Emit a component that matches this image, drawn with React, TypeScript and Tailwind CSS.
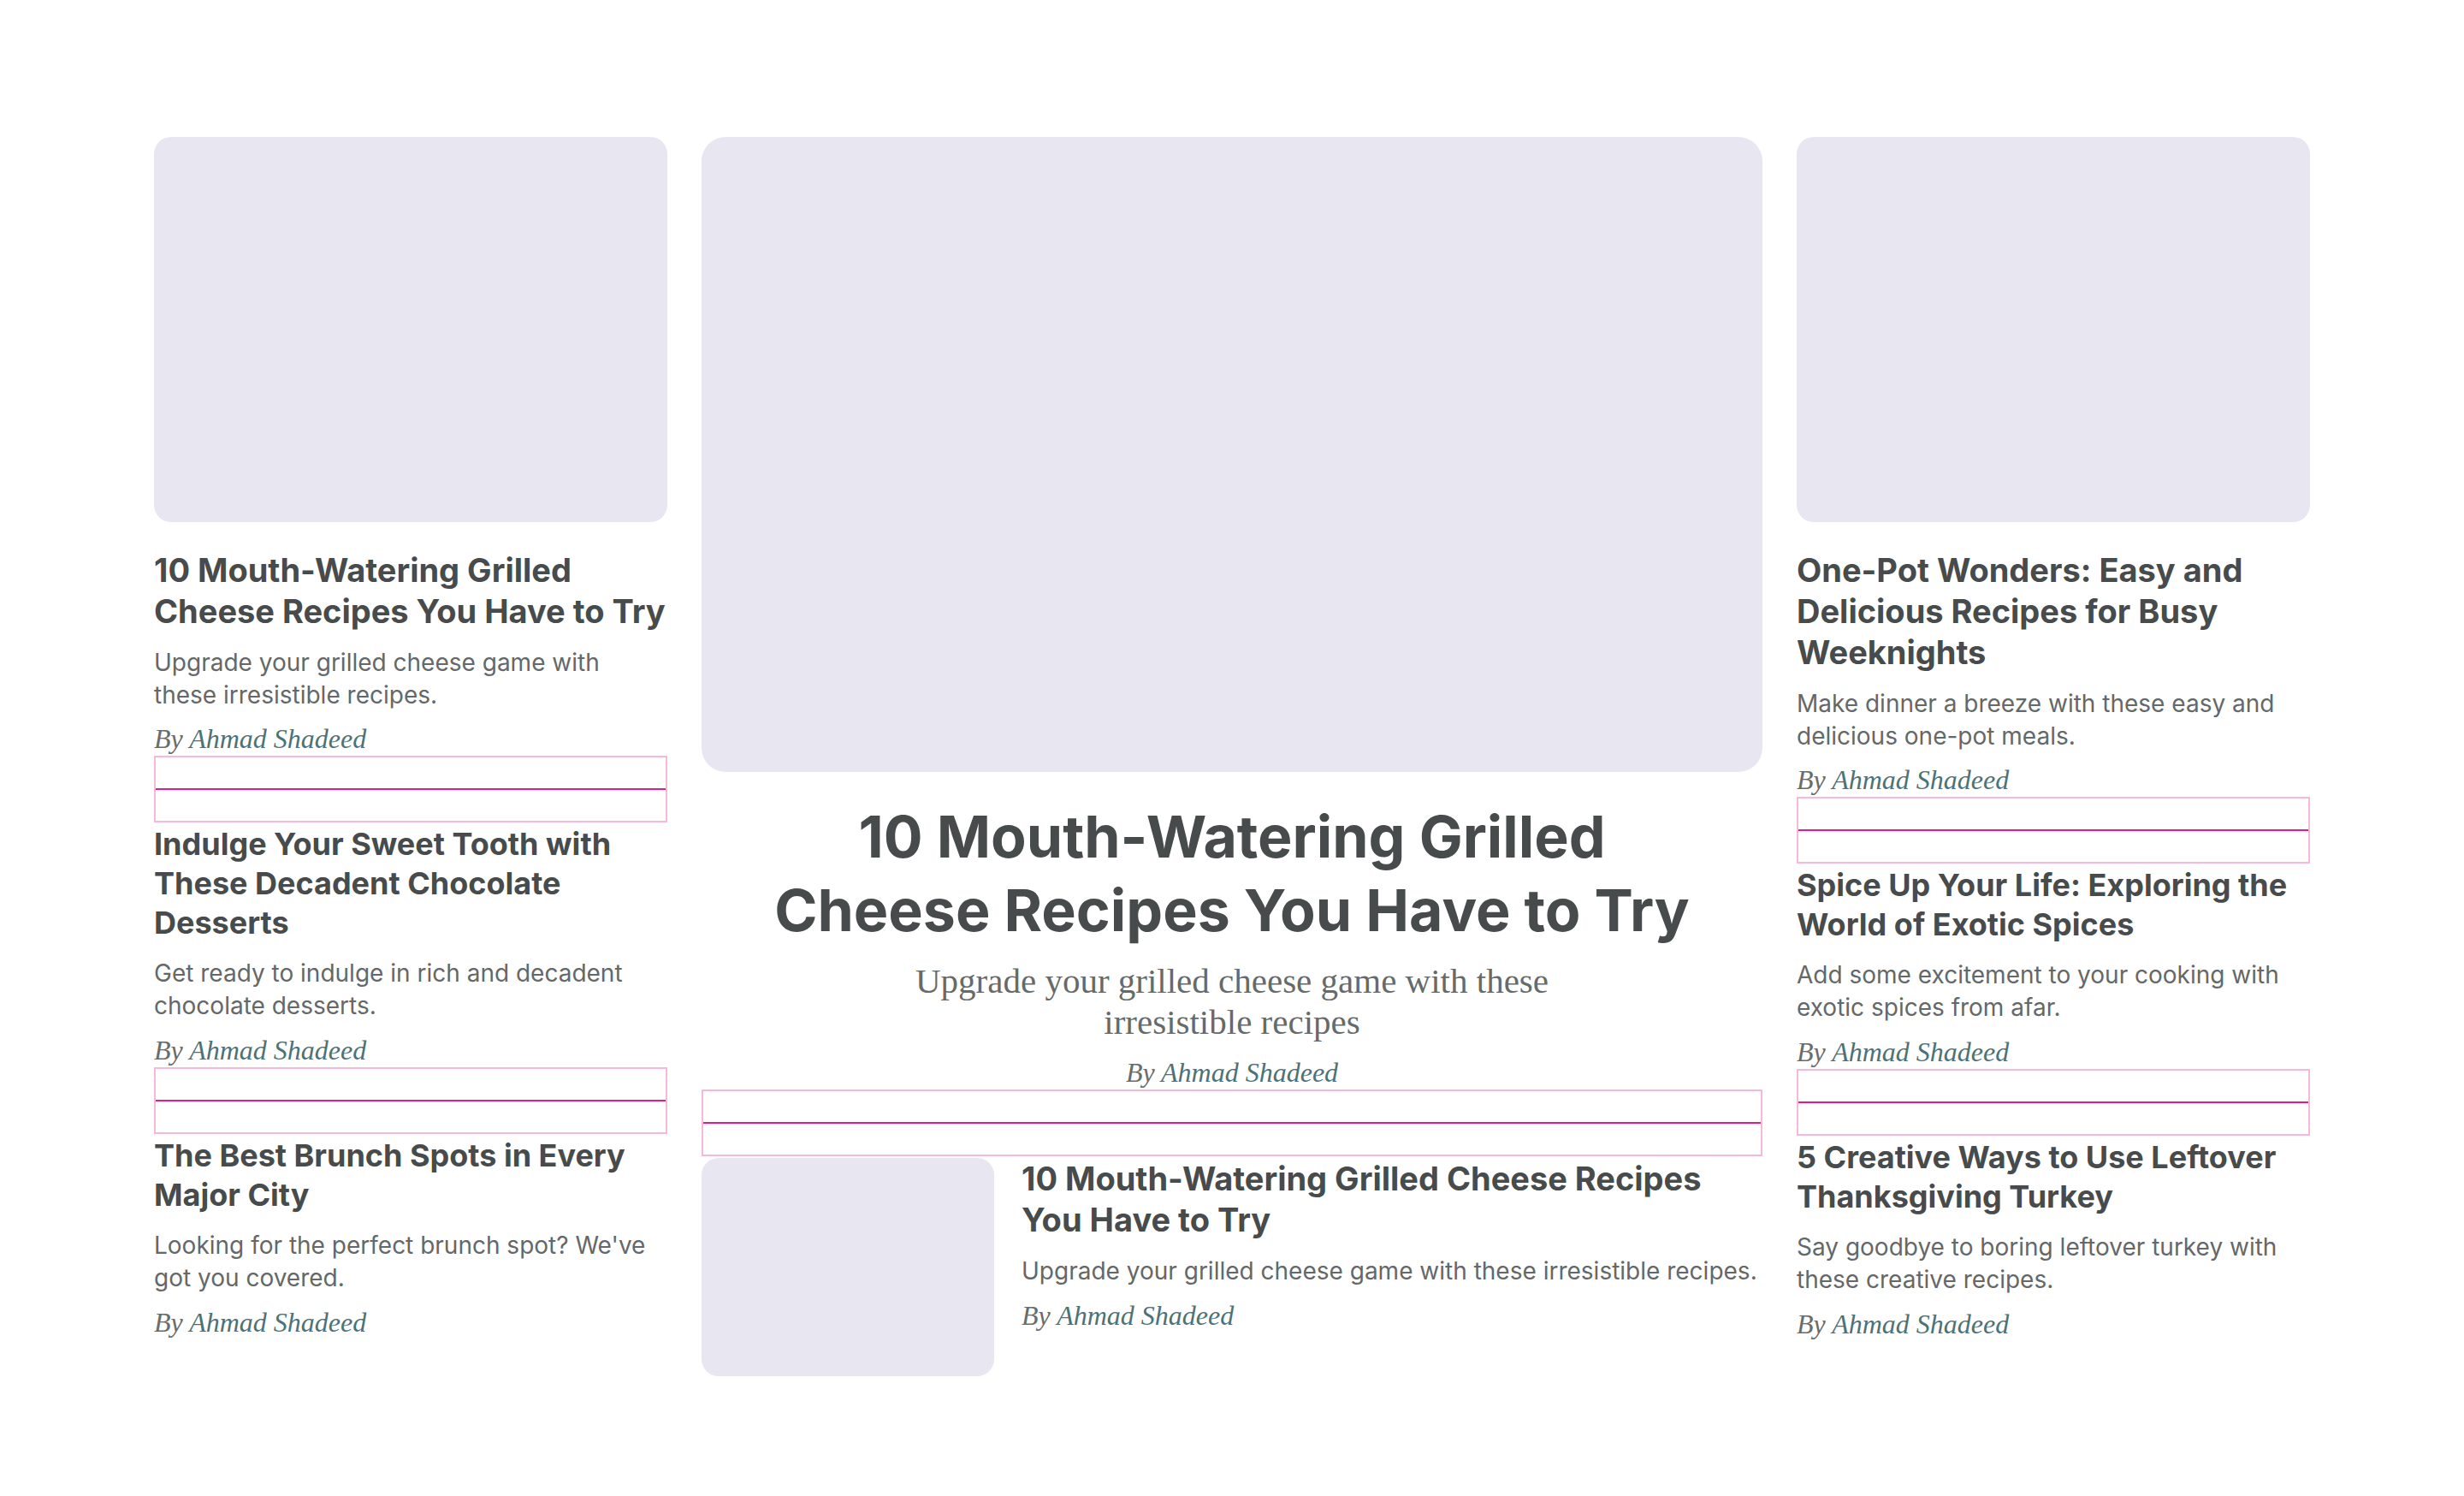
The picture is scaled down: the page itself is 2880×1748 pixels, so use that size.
import React from 'react';

type Article = {
  title: string;
  desc: string;
  image?: boolean;
};

const LEFT: Article[] = [
  {
    title: '10 Mouth-Watering Grilled Cheese Recipes You Have to Try',
    desc: 'Upgrade your grilled cheese game with these irresistible recipes.',
    image: true,
  },
  {
    title: 'Indulge Your Sweet Tooth with These Decadent Chocolate Desserts',
    desc: 'Get ready to indulge in rich and decadent chocolate desserts.',
  },
  {
    title: 'The Best Brunch Spots in Every Major City',
    desc: "Looking for the perfect brunch spot? We've got you covered.",
  },
];

const RIGHT: Article[] = [
  {
    title: 'One-Pot Wonders: Easy and Delicious Recipes for Busy Weeknights',
    desc: 'Make dinner a breeze with these easy and delicious one-pot meals.',
    image: true,
  },
  {
    title: 'Spice Up Your Life: Exploring the World of Exotic Spices',
    desc: 'Add some excitement to your cooking with exotic spices from afar.',
  },
  {
    title: '5 Creative Ways to Use Leftover Thanksgiving Turkey',
    desc: 'Say goodbye to boring leftover turkey with these creative recipes.',
  },
];

const sans = "font-['Inter','Liberation_Sans',sans-serif]";
const serif = "font-['Liberation_Serif','DejaVu_Serif',serif]";

function Byline({ className = '' }: { className?: string }) {
  return (
    <p className={`${serif} italic text-[32px] leading-[40px] text-[#6b6b6b] ${className}`}>
      By <span className="text-[#4d7178]">Ahmad Shadeed</span>
    </p>
  );
}

function Separator() {
  return (
    <div className="h-[78px] border-2 border-[#f7b8dc] flex items-center">
      <div className="h-[2px] w-full bg-[#e8198a]" />
    </div>
  );
}

function Card({ article, last }: { article: Article; last: boolean }) {
  return (
    <article>
      {article.image && <div className="aspect-[4/3] w-full rounded-[20px] bg-[#e8e7f1] mb-8" />}
      <h3
        className={`font-bold text-[#474b4b] ${
          article.image ? 'text-[38px] leading-[48px]' : 'text-[36px] leading-[46px] mt-[2px]'
        }`}
      >
        {article.title}
      </h3>
      <p className="mt-[17px] text-[28px] leading-[38px] text-[#646868]">{article.desc}</p>
      <Byline className={article.image ? 'mt-[12px]' : 'mt-[13px]'} />
      {!last && <Separator />}
    </article>
  );
}

export default function App() {
  return (
    <div className={`min-h-screen bg-white pt-[160px] ${sans}`}>
      <div className="mx-auto w-[2520px] grid grid-cols-[600px_1240px_600px] gap-x-10 items-start">
        <div>
          {LEFT.map((a, i) => (
            <Card key={a.title} article={a} last={i === LEFT.length - 1} />
          ))}
        </div>

        <div>
          <div className="h-[742px] w-full rounded-[28px] bg-[#e8e7f1]" />
          <h2 className="mt-8 mx-auto max-w-[1090px] text-center text-[68px] leading-[86px] font-bold text-[#474b4b]">
            10 Mouth-Watering Grilled Cheese Recipes You Have to Try
          </h2>
          <p className={`mt-4 mx-auto max-w-[800px] text-center ${serif} text-[41px] leading-[48px] text-[#666a6a]`}>
            Upgrade your grilled cheese game with these irresistible recipes
          </p>
          <Byline className="mt-[15px] text-center" />
          <Separator />
          <div className="mt-[2px] flex gap-8">
            <div className="w-[342px] h-[255px] shrink-0 rounded-[20px] bg-[#e8e7f1]" />
            <div>
              <h3 className="text-[38px] leading-[48px] font-bold text-[#474b4b]">
                10 Mouth-Watering Grilled Cheese Recipes You Have to Try
              </h3>
              <p className="mt-[17px] text-[28px] leading-[38px] text-[#646868]">
                Upgrade your grilled cheese game with these irresistible recipes.
              </p>
              <Byline className="mt-[13px]" />
            </div>
          </div>
        </div>

        <div>
          {RIGHT.map((a, i) => (
            <Card key={a.title} article={a} last={i === RIGHT.length - 1} />
          ))}
        </div>
      </div>
    </div>
  );
}
